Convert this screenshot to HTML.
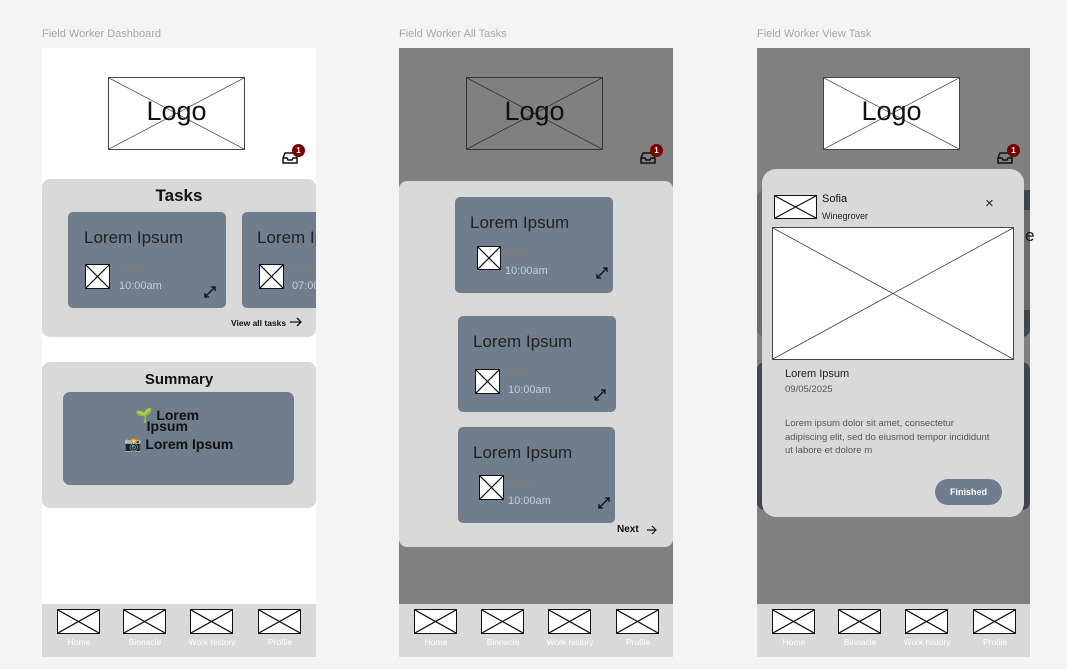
<!DOCTYPE html>
<html><head><meta charset="utf-8"><style>
*{margin:0;padding:0;box-sizing:border-box}
body{width:1067px;height:669px;background:#f4f4f4;font-family:"Liberation Sans",sans-serif;position:relative;overflow:hidden}
.a{position:absolute;white-space:nowrap}
.lbl{font-size:11px;color:#a8a8a8}
.xb{position:absolute;background:#fff;border:1.5px solid #111}
.xb svg{position:absolute;left:0;top:0;width:100%;height:100%}
.card{position:absolute;background:#6f7d8c;border-radius:5px}
.ct{position:absolute;font-size:17px;color:#222;white-space:nowrap}
.s1{position:absolute;font-size:11px;color:#7d7d7d;font-weight:bold}
.s2{position:absolute;font-size:11px;color:#c7ccd2}
.nav{position:absolute;background:#d9d9d9;height:53px;width:274px;top:604px}
.nl{position:absolute;top:637px;font-size:8.5px;color:#fff;width:60px;text-align:center;white-space:nowrap}
</style></head><body>
<div class="a lbl" style="left:42px;top:28px">Field Worker Dashboard</div>
<div class="a lbl" style="left:399px;top:28px">Field Worker All Tasks</div>
<div class="a lbl" style="left:757px;top:28px">Field Worker View Task</div>

<!-- Frame 1 -->
<div class="a" style="left:42px;top:48px;width:274px;height:609px;background:#fff"></div>
<div class="xb" style="left:108px;top:77px;width:137px;height:73px;border:1px solid #444"><svg viewBox="0 0 100 100" preserveAspectRatio="none"><path d="M0 0L100 100M100 0L0 100" stroke="#555" stroke-width="0.8" vector-effect="non-scaling-stroke"/></svg><div class="a" style="left:0;right:0;top:18px;text-align:center;font-size:27px;color:#111">Logo</div></div>
<svg class="a" style="left:282px;top:149px" width="18" height="16" viewBox="0 0 18 16"><path d="M3 4h10l2 5v5H1V9z M1 9h4l1 2h4l1-2h4" fill="none" stroke="#111" stroke-width="1.5"/></svg>
<div class="a" style="left:292px;top:144px;width:13px;height:13px;border-radius:50%;background:#7a0000;color:#fff;font-size:8px;font-weight:bold;text-align:center;line-height:13px">1</div>
<div class="a" style="left:42px;top:179px;width:274px;height:158px;background:#d9d9d9;border-radius:8px;overflow:hidden">
 <div class="a" style="left:0;right:0;top:7px;text-align:center;font-size:17px;font-weight:bold;color:#111">Tasks</div>
 <div class="card" style="left:26px;top:33px;width:158px;height:96px"></div>
 <div class="card" style="left:200px;top:33px;width:158px;height:96px"></div>
 <div class="ct" style="left:42px;top:49px">Lorem Ipsum</div>
 <div class="ct" style="left:215px;top:49px">Lorem Ipsum</div>
 <div class="xb" style="left:43px;top:85px;width:25px;height:25px"><svg viewBox="0 0 10 10" preserveAspectRatio="none"><path d="M0 0L10 10M10 0L0 10" stroke="#111" stroke-width="1.2" vector-effect="non-scaling-stroke"/></svg></div>
 <div class="xb" style="left:217px;top:85px;width:25px;height:25px"><svg viewBox="0 0 10 10" preserveAspectRatio="none"><path d="M0 0L10 10M10 0L0 10" stroke="#111" stroke-width="1.2" vector-effect="non-scaling-stroke"/></svg></div>
 <div class="s1" style="left:77px;top:84px">Sofia</div><div class="s2" style="left:77px;top:101px">10:00am</div>
 <div class="s1" style="left:250px;top:84px">Sofia</div><div class="s2" style="left:250px;top:101px">07:00am</div>
 <svg class="a" style="left:162px;top:107px" width="12" height="12" viewBox="0 0 12 12"><path d="M1 11L11 1M7 1h4v4M1 7v4h4" fill="none" stroke="#111" stroke-width="1.3"/></svg>
 <div class="a" style="left:189px;top:139px;font-size:8.5px;font-weight:bold;color:#111">View all tasks</div>
 <svg class="a" style="left:248px;top:138px" width="12" height="10" viewBox="0 0 12 10"><path d="M0 5h11M7 1l4 4-4 4" fill="none" stroke="#111" stroke-width="1.3"/></svg>
</div>
<div class="a" style="left:42px;top:362px;width:274px;height:146px;background:#d9d9d9;border-radius:8px">
 <div class="a" style="left:0;right:0;top:9px;text-align:center;font-size:15px;font-weight:bold;color:#111">Summary</div>
 <div class="card" style="left:21px;top:30px;width:231px;height:93px;border-radius:7px">
  <div class="a" style="left:72px;top:18px;font-size:14px;font-weight:bold;color:#111;line-height:11px">🌱 Lorem<br>&nbsp;&nbsp;&nbsp;Ipsum</div>
  <div class="a" style="left:61px;top:44px;font-size:14px;font-weight:bold;color:#111">📸 Lorem Ipsum</div>
 </div>
</div>

<!-- Frame 2 -->
<div class="a" style="left:399px;top:48px;width:274px;height:556px;background:#808080"></div>
<div class="xb" style="left:466px;top:77px;width:137px;height:73px;border:1px solid #333;background:transparent"><svg viewBox="0 0 100 100" preserveAspectRatio="none"><path d="M0 0L100 100M100 0L0 100" stroke="#333" stroke-width="0.8" vector-effect="non-scaling-stroke"/></svg><div class="a" style="left:0;right:0;top:18px;text-align:center;font-size:27px;color:#111">Logo</div></div>
<svg class="a" style="left:640px;top:149px" width="18" height="16" viewBox="0 0 18 16"><path d="M3 4h10l2 5v5H1V9z M1 9h4l1 2h4l1-2h4" fill="none" stroke="#111" stroke-width="1.5"/></svg>
<div class="a" style="left:650px;top:144px;width:13px;height:13px;border-radius:50%;background:#7a0000;color:#fff;font-size:8px;font-weight:bold;text-align:center;line-height:13px">1</div>
<div class="a" style="left:399px;top:181px;width:274px;height:366px;background:#d9d9d9;border-radius:8px">
 <div class="card" style="left:56px;top:16px;width:158px;height:96px"></div>
 <div class="ct" style="left:71px;top:32px">Lorem Ipsum</div>
 <div class="xb" style="left:78px;top:65px;width:24px;height:24px"><svg viewBox="0 0 10 10" preserveAspectRatio="none"><path d="M0 0L10 10M10 0L0 10" stroke="#111" stroke-width="1.2" vector-effect="non-scaling-stroke"/></svg></div>
 <div class="s1" style="left:106px;top:68px">Sofia</div><div class="s2" style="left:106px;top:84px">10:00am</div>
 <svg class="a" style="left:197px;top:86px" width="12" height="12" viewBox="0 0 12 12"><path d="M1 11L11 1M7 1h4v4M1 7v4h4" fill="none" stroke="#111" stroke-width="1.3"/></svg>
 <div class="card" style="left:59px;top:135px;width:158px;height:96px"></div>
 <div class="ct" style="left:74px;top:151px">Lorem Ipsum</div>
 <div class="xb" style="left:76px;top:188px;width:25px;height:25px"><svg viewBox="0 0 10 10" preserveAspectRatio="none"><path d="M0 0L10 10M10 0L0 10" stroke="#111" stroke-width="1.2" vector-effect="non-scaling-stroke"/></svg></div>
 <div class="s1" style="left:109px;top:187px">Sofia</div><div class="s2" style="left:109px;top:203px">10:00am</div>
 <svg class="a" style="left:195px;top:208px" width="12" height="12" viewBox="0 0 12 12"><path d="M1 11L11 1M7 1h4v4M1 7v4h4" fill="none" stroke="#111" stroke-width="1.3"/></svg>
 <div class="card" style="left:59px;top:246px;width:157px;height:96px"></div>
 <div class="ct" style="left:74px;top:262px">Lorem Ipsum</div>
 <div class="xb" style="left:80px;top:294px;width:25px;height:25px"><svg viewBox="0 0 10 10" preserveAspectRatio="none"><path d="M0 0L10 10M10 0L0 10" stroke="#111" stroke-width="1.2" vector-effect="non-scaling-stroke"/></svg></div>
 <div class="s1" style="left:109px;top:298px">Sofia</div><div class="s2" style="left:109px;top:314px">10:00am</div>
 <svg class="a" style="left:199px;top:316px" width="12" height="12" viewBox="0 0 12 12"><path d="M1 11L11 1M7 1h4v4M1 7v4h4" fill="none" stroke="#111" stroke-width="1.3"/></svg>
 <div class="a" style="left:218px;top:343px;font-size:10px;font-weight:bold;color:#111">Next</div>
 <svg class="a" style="left:248px;top:344px" width="10" height="10" viewBox="0 0 10 10"><path d="M0 5h9M5 1l4 4-4 4" fill="none" stroke="#111" stroke-width="1.2"/></svg>
</div>

<!-- Frame 3 -->
<div class="a" style="left:757px;top:48px;width:273px;height:556px;background:#808080"></div>
<div class="a" style="left:757px;top:190px;width:273px;height:147px;background:#6c6c6c;border-radius:8px"></div>
<div class="a" style="left:1010px;top:190px;width:20px;height:20px;background:#3e4650"></div>
<div class="a" style="left:1010px;top:310px;width:20px;height:27px;background:#3e4650;border-radius:0 0 8px 0"></div>
<div class="a" style="left:1025px;top:226px;font-size:17px;color:#111">e</div>
<div class="a" style="left:757px;top:362px;width:273px;height:148px;background:#3e4650;border-radius:8px"></div>
<div class="xb" style="left:823px;top:77px;width:137px;height:73px;border:1px solid #444"><svg viewBox="0 0 100 100" preserveAspectRatio="none"><path d="M0 0L100 100M100 0L0 100" stroke="#555" stroke-width="0.8" vector-effect="non-scaling-stroke"/></svg><div class="a" style="left:0;right:0;top:18px;text-align:center;font-size:27px;color:#111">Logo</div></div>
<svg class="a" style="left:997px;top:149px" width="18" height="16" viewBox="0 0 18 16"><path d="M3 4h10l2 5v5H1V9z M1 9h4l1 2h4l1-2h4" fill="none" stroke="#111" stroke-width="1.5"/></svg>
<div class="a" style="left:1007px;top:144px;width:13px;height:13px;border-radius:50%;background:#7a0000;color:#fff;font-size:8px;font-weight:bold;text-align:center;line-height:13px">1</div>
<div class="a" style="left:762px;top:169px;width:262px;height:348px;background:#d9d9d9;border-radius:14px">
 <div class="xb" style="left:12px;top:26px;width:43px;height:24px"><svg viewBox="0 0 10 10" preserveAspectRatio="none"><path d="M0 0L10 10M10 0L0 10" stroke="#111" stroke-width="1.2" vector-effect="non-scaling-stroke"/></svg></div>
 <div class="a" style="left:60px;top:24px;font-size:11px;color:#111">Sofia</div>
 <div class="a" style="left:60px;top:42px;font-size:9px;color:#222">Winegrover</div>
 <div class="a" style="left:223px;top:26px;font-size:15px;color:#222">×</div>
 <div class="xb" style="left:10px;top:58px;width:242px;height:133px;border:1px solid #444"><svg viewBox="0 0 100 100" preserveAspectRatio="none"><path d="M0 0L100 100M100 0L0 100" stroke="#444" stroke-width="0.8" vector-effect="non-scaling-stroke"/></svg></div>
 <div class="a" style="left:23px;top:199px;font-size:11px;color:#222">Lorem Ipsum</div>
 <div class="a" style="left:23px;top:215px;font-size:9.5px;color:#555">09/05/2025</div>
 <div class="a" style="left:23px;top:248px;font-size:9.5px;color:#555;line-height:13.5px">Lorem ipsum dolor sit amet, consectetur<br>adipiscing elit, sed do eiusmod tempor incididunt<br>ut labore et dolore m</div>
 <div class="a" style="left:173px;top:310px;width:67px;height:26px;background:#6f7d8c;border-radius:13px;color:#fff;font-size:9px;font-weight:bold;text-align:center;line-height:26px">Finished</div>
</div>

<!-- Navs -->
<div class="nav" style="left:42px"></div>
<div class="nav" style="left:399px"></div>
<div class="nav" style="left:757px;width:273px"></div>
<div id="navs"></div>
<script>
var xs=[[57,123,190,258],[414,481,548,616],[772,838,905,973]];var lab=["Home","Binnacle","Work history","Profile"];var h="";
xs.forEach(function(r){r.forEach(function(x,i){h+='<div class="xb" style="left:'+x+'px;top:609px;width:43px;height:25px"><svg viewBox="0 0 10 10" preserveAspectRatio="none"><path d="M0 0L10 10M10 0L0 10" stroke="#111" stroke-width="1.2" vector-effect="non-scaling-stroke"/></svg></div><div class="nl" style="left:'+(x-8)+'px">'+lab[i]+'</div>';});});
document.getElementById("navs").innerHTML=h;
</script>
</body></html>
